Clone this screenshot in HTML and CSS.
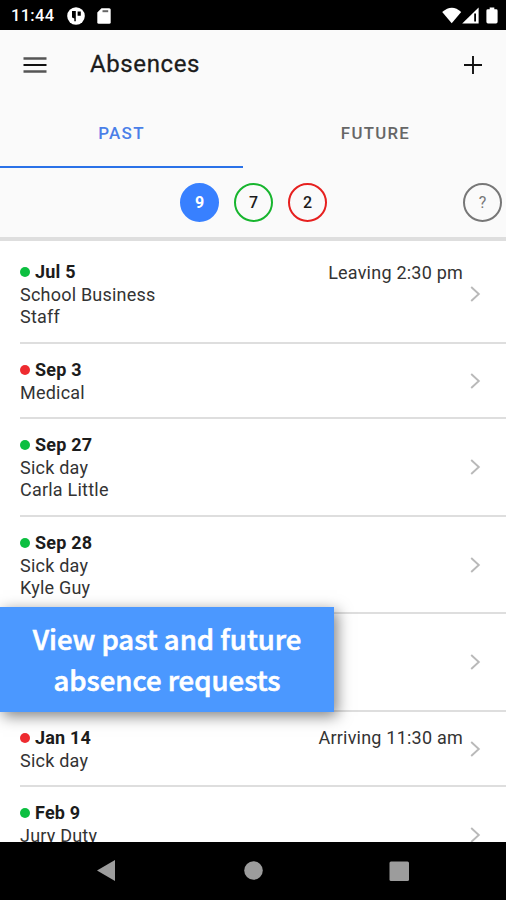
FILE: index.html
```html
<!DOCTYPE html>
<html lang="en">
<head>
<meta charset="utf-8">
<title>Absences</title>
<link rel="stylesheet" href="styles.css">
</head>
<body>
<div class="phone">
  <div class="status">
    <span class="clock">11:44</span>
    <svg class="status-app" width="18" height="18" viewBox="0 0 18 18"><circle cx="9" cy="9" r="8.800" fill="#fff"/><path d="M5 4h3.800v10.200H7.300V11.500L5 10.500zM10.600 4.500h3.200v4.200h-3.200z" fill="#000"/></svg>
    <svg class="status-sd" width="14" height="16" viewBox="0 0 14 16"><path d="M4.500.3h7.700q1.500 0 1.500 1.500v12.400q0 1.500-1.500 1.500H1.800Q.3 15.700.3 14.200V4.500z" fill="#fff"/><path d="M5.500 2.200h5.700v2H5.500z" fill="#666"/></svg>
    <svg class="status-right" width="56" height="17" viewBox="0 0 56 17"><path d="M.2 5Q10 -3.500 19.200 5L9.700 16.200z" fill="#fff"/><path d="M20.200 16.400 36.600.5v15.900z" fill="#fff"/><path d="M32.200 6.500h1.800v8h-1.800z" fill="#000"/><path d="M47.700.4h4.600v1.900h1.900q1.400 0 1.400 1.400v11.100q0 1.600-1.600 1.600h-8q-1.600 0-1.600-1.600V3.700q0-1.400 1.400-1.400h1.900z" fill="#fff"/></svg>
  </div>
  <header class="header">
    <div class="toolbar">
      <svg class="menu" width="24" height="18" viewBox="0 0 24 18"><path d="M.5 2.500h23M.5 15.500h23" stroke="#555" stroke-width="2.300"/><path d="M.5 9h23" stroke="#111" stroke-width="2"/></svg>
      <h1 class="title">Absences</h1>
      <svg class="add" width="18" height="18" viewBox="0 0 18 18"><path d="M0 9h18M9 0v18" stroke="#111" stroke-width="1.900"/></svg>
    </div>
    <nav class="tabs">
      <a class="tab active"><span>PAST</span></a>
      <a class="tab"><span>FUTURE</span></a>
    </nav>
    <div class="filters">
      <span class="chip all">9</span>
      <span class="chip approved">7</span>
      <span class="chip denied">2</span>
      <span class="chip help">?</span>
    </div>
  </header>
  <main class="list">
    <section class="row">
      <div class="info"><b class="date approved">Jul 5</b><span>School Business</span><span>Staff</span></div>
      <span class="note">Leaving 2:30 pm</span>
      <svg class="chevron" width="11" height="16" viewBox="0 0 11 16"><path d="M1.200 1 8.800 8l-7.600 7"/></svg>
    </section>
    <section class="row short">
      <div class="info"><b class="date denied">Sep 3</b><span>Medical</span></div>
      <svg class="chevron" width="11" height="16" viewBox="0 0 11 16"><path d="M1.200 1 8.800 8l-7.600 7"/></svg>
    </section>
    <section class="row">
      <div class="info"><b class="date approved">Sep 27</b><span>Sick day</span><span>Carla Little</span></div>
      <svg class="chevron" width="11" height="16" viewBox="0 0 11 16"><path d="M1.200 1 8.800 8l-7.600 7"/></svg>
    </section>
    <section class="row">
      <div class="info"><b class="date approved">Sep 28</b><span>Sick day</span><span>Kyle Guy</span></div>
      <svg class="chevron" width="11" height="16" viewBox="0 0 11 16"><path d="M1.200 1 8.800 8l-7.600 7"/></svg>
    </section>
    <section class="row">
      <div class="info"></div>
      <svg class="chevron" width="11" height="16" viewBox="0 0 11 16"><path d="M1.200 1 8.800 8l-7.600 7"/></svg>
    </section>
    <section class="row short">
      <div class="info"><b class="date denied">Jan 14</b><span>Sick day</span></div>
      <span class="note">Arriving 11:30 am</span>
      <svg class="chevron" width="11" height="16" viewBox="0 0 11 16"><path d="M1.200 1 8.800 8l-7.600 7"/></svg>
    </section>
    <section class="row">
      <div class="info"><b class="date approved">Feb 9</b><span>Jury Duty</span></div>
      <svg class="chevron" width="11" height="16" viewBox="0 0 11 16"><path d="M1.200 1 8.800 8l-7.600 7"/></svg>
    </section>
  </main>
  <footer class="navbar">
    <svg width="506" height="58" viewBox="0 0 506 58" fill="#9c9c9c"><path d="M97 28.500 115 18v21z"/><circle cx="253.500" cy="28.500" r="9.300"/><rect x="389.500" y="19.500" width="19.500" height="19.500" rx="1.500"/></svg>
  </footer>
  <aside class="callout">View past and future<br>absence requests</aside>
</div>
</body>
</html>
```
FILE: styles.css
```css
* { box-sizing: border-box; }
body { margin: 0; background: #fff; font-family: Roboto, sans-serif; color: #1c1c1c; }
.phone { position: relative; width: 506px; height: 900px; display: flex; flex-direction: column; overflow: hidden; }
svg { display: block; flex: none; }

.status { height: 30px; flex: none; display: flex; align-items: center; padding: 1px 8px 0 11px; background: #000; color: #fff; }
.clock { width: 56px; font-size: 16.5px; font-weight: 500; letter-spacing: 0.3px; }
.status-sd { margin-left: 12px; }
.status-right { margin-left: auto; }

.header { height: 211px; flex: none; background: #fafafa; border-bottom: 4px solid #dedede; }
.toolbar { height: 69px; display: flex; align-items: center; padding: 0 24px 0 23px; }
.title { margin: -2px auto 0 43px; font-size: 24px; font-weight: 400; -webkit-text-stroke: 0.3px #1c1c1c; letter-spacing: 0.6px; color: #1c1c1c; }
.tabs { height: 69px; display: flex; }
.tab { width: 243px; display: flex; align-items: center; justify-content: center; border-bottom: 2px solid transparent; font-size: 17px; font-weight: 500; letter-spacing: 1.3px; color: #666; }
.tab + .tab { width: 263px; padding-left: 2px; font-size: 16.8px; }
.tab.active { color: #4a7fe8; border-color: #2a72e8; }
.filters { height: 69px; display: flex; align-items: center; gap: 15px; padding: 0 4px 0 180px; }
.chip { width: 39px; height: 39px; display: flex; align-items: center; justify-content: center; border: 2px solid; border-radius: 50%; font-size: 16px; font-weight: 500; }
.chip.all { background: #3880ff; border-color: #3880ff; color: #fff; font-weight: 700; }
.chip.approved { border-color: #17b52e; }
.chip.denied { border-color: #e6201f; }
.chip.help { margin-left: auto; border-color: #777; color: #777; font-weight: 400; }

.list { flex: 1; min-height: 0; overflow: hidden; padding-top: 5px; }
.row { height: 97.5px; margin-left: 20px; padding-right: 25px; display: flex; align-items: center; border-bottom: 2px solid #dedede; }
.row.short { height: 75.5px; }
.info { align-self: flex-start; flex: 1; display: flex; flex-direction: column; padding-top: 14px; font-size: 18px; line-height: 22px; letter-spacing: 0.22px; color: #333; }
.date { display: flex; align-items: center; gap: 5px; height: 24px; font-size: 18px; font-weight: 700; color: #1c1c1c; letter-spacing: 0.2px; }
.date::before { content: ""; width: 10px; height: 10px; border-radius: 50%; background: #0cbf40; }
.date.denied::before { background: #ee2b30; }
.note { align-self: flex-start; padding-top: 15.5px; margin-right: 7px; font-size: 18px; line-height: 22px; letter-spacing: 0.22px; color: #333; }
.chevron { margin-top: 1px; fill: none; stroke: #b9b9b9; stroke-width: 1.9; }
.navbar { height: 58px; flex: none; background: #000; }

.callout { position: absolute; left: 0; top: 607px; width: 334px; height: 105px; padding-top: 11px; background: #4b98ff; box-shadow: 3px 4px 14px rgba(0, 0, 0, 0.5); color: #fff; font-family: "Noto Sans CJK SC", sans-serif; font-size: 27.5px; font-weight: 500; -webkit-text-stroke: 0.6px #fff; line-height: 40.5px; text-align: center; }
```
